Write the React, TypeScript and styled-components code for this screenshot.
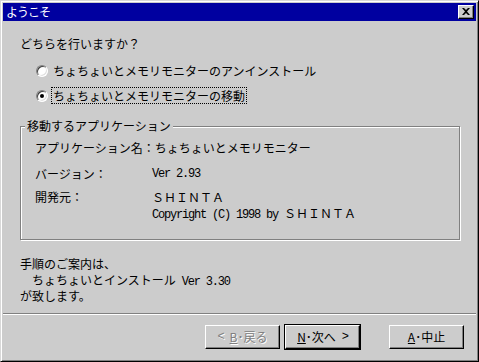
import React, { FC } from 'react';
import styled, { createGlobalStyle } from 'styled-components';

const GlobalStyle = createGlobalStyle`
  html, body {
    margin: 0;
    padding: 0;
    background: #cccccc;
  }
  body {
    font-family: "Noto Sans CJK JP", "Noto Sans", sans-serif;
    font-size: 12px;
    color: #000;
  }
`;

const Window = styled.div`
  box-sizing: border-box;
  width: 479px;
  height: 362px;
  padding: 2px;
  background: #cccccc;
  border-top: 1px solid #d8d8d8;
  border-left: 1px solid #d8d8d8;
  border-right: 1px solid #000;
  border-bottom: 1px solid #000;
  box-shadow: inset 1px 1px 0 #fff, inset -1px -1px 0 #808080;
  display: flex;
  flex-direction: column;
`;

const TitleBar = styled.div`
  height: 18px;
  background: #0000a0;
  color: #fff;
  display: flex;
  align-items: center;
  justify-content: space-between;
  padding: 0 2px 0 3px;
  line-height: 18px;
`;

const TitleText = styled.span`
  font-size: 12px;
  letter-spacing: -1px;
`;

const CloseButton = styled.div`
  box-sizing: border-box;
  width: 16px;
  height: 14px;
  background: #cccccc;
  border-top: 1px solid #fff;
  border-left: 1px solid #fff;
  border-right: 1px solid #000;
  border-bottom: 1px solid #000;
  box-shadow: inset -1px -1px 0 #808080;
  display: flex;
  align-items: center;
  justify-content: center;
  padding: 0 1px 1px 0;
`;

const Content = styled.div`
  padding: 15px 16px 0 17px;
  display: flex;
  flex-direction: column;
`;

const Line = styled.div`
  line-height: 16px;
  height: 16px;
  white-space: pre;
`;

const RadioList = styled.div`
  display: flex;
  flex-direction: column;
  gap: 8px;
  margin: 10px 0 0 16px;
`;

const RadioRow = styled.div`
  display: flex;
  align-items: center;
  gap: 4px;
  height: 17px;
`;

const RadioCircle = styled.span<{ $checked?: boolean }>`
  position: relative;
  box-sizing: border-box;
  width: 12px;
  height: 12px;
  border-radius: 50%;
  background: #fff;
  border-top: 1px solid #808080;
  border-left: 1px solid #808080;
  border-right: 1px solid #fff;
  border-bottom: 1px solid #fff;
  box-shadow: inset 1px 1px 0 #404040, inset -1px -1px 0 #dfdfdf;
  flex-shrink: 0;

  &::after {
    content: '';
    display: ${(p) => (p.$checked ? 'block' : 'none')};
    position: absolute;
    left: 3px;
    top: 3px;
    width: 4px;
    height: 4px;
    border-radius: 50%;
    background: #000;
  }
`;

const RadioLabel = styled.span<{ $focus?: boolean }>`
  line-height: 15px;
  padding: 0 1px;
  white-space: nowrap;
  outline: ${(p) => (p.$focus ? '1px dotted #000' : 'none')};
`;

const GroupBox = styled.div`
  position: relative;
  box-sizing: border-box;
  width: 440px;
  margin-top: 22px;
  padding: 13px 0 16px 14px;
  border: 1px solid #808080;
  box-shadow: 1px 1px 0 #fff, inset 1px 1px 0 #fff;
`;

const Legend = styled.span`
  position: absolute;
  top: -9px;
  left: 4px;
  padding: 0 2px;
  background: #cccccc;
  line-height: 16px;
  white-space: nowrap;
`;

const InfoRow = styled.div<{ $gap: number }>`
  display: flex;
  margin-top: ${(p) => p.$gap}px;
  line-height: 16px;
`;

const InfoLabel = styled.span`
  width: 117px;
  flex-shrink: 0;
  white-space: nowrap;
`;

const InfoValue = styled.div`
  display: flex;
  flex-direction: column;
  white-space: pre;
`;

const Half = styled.span`
  font-family: "Liberation Mono", monospace;
  font-size: 12px;
  letter-spacing: -1.2px;
`;

const Footnote = styled.div`
  margin-top: 16px;
  display: flex;
  flex-direction: column;
`;

const Separator = styled.div`
  height: 1px;
  margin-top: 9px;
  background: #808080;
  border-bottom: 1px solid #fff;
`;

const ButtonRow = styled.div`
  display: flex;
  justify-content: flex-end;
  align-items: center;
  padding: 10px 12px 0 0;
`;

const Button = styled.div<{ $default?: boolean; $disabled?: boolean; $ml: number }>`
  box-sizing: border-box;
  width: 75px;
  height: 24px;
  margin-left: ${(p) => p.$ml}px;
  background: #cccccc;
  border-top: 1px solid #fff;
  border-left: 1px solid #fff;
  border-right: 1px solid #000;
  border-bottom: 1px solid #000;
  box-shadow: inset -1px -1px 0 #808080;
  outline: ${(p) => (p.$default ? '1px solid #000' : 'none')};
  display: flex;
  align-items: center;
  justify-content: center;
  white-space: pre;
  line-height: 16px;
  color: ${(p) => (p.$disabled ? '#808080' : '#000')};
  text-shadow: ${(p) => (p.$disabled ? '1px 1px 0 #fff' : 'none')};
`;

const Accel = styled.span`
  text-decoration: underline;
`;

const CloseIcon: FC = () => (
  <svg width="8" height="7" viewBox="0 0 8 7">
    <path d="M0 0h2l2 2 2-2h2L5 3.5 8 7H6L4 5 2 7H0l3-3.5z" fill="#000" />
  </svg>
);

const App: FC = () => {
  return (
    <>
      <GlobalStyle />
      <Window>
        <TitleBar>
          <TitleText>ようこそ</TitleText>
          <CloseButton>
            <CloseIcon />
          </CloseButton>
        </TitleBar>

        <Content>
          <Line>どちらを行いますか？</Line>

          <RadioList>
            <RadioRow>
              <RadioCircle />
              <RadioLabel>ちょちょいとメモリモニターのアンインストール</RadioLabel>
            </RadioRow>
            <RadioRow>
              <RadioCircle $checked />
              <RadioLabel $focus>ちょちょいとメモリモニターの移動</RadioLabel>
            </RadioRow>
          </RadioList>

          <GroupBox>
            <Legend>移動するアプリケーション</Legend>
            <InfoRow $gap={0}>
              <InfoLabel>アプリケーション名：ちょちょいとメモリモニター</InfoLabel>
            </InfoRow>
            <InfoRow $gap={10}>
              <InfoLabel>バージョン：</InfoLabel>
              <InfoValue>
                <Half>Ver 2.93</Half>
              </InfoValue>
            </InfoRow>
            <InfoRow $gap={7}>
              <InfoLabel>開発元：</InfoLabel>
              <InfoValue>
                <span>ＳＨＩＮＴＡ</span>
                <span>
                  <Half>Copyright (C) 1998 by </Half>ＳＨＩＮＴＡ
                </span>
              </InfoValue>
            </InfoRow>
          </GroupBox>

          <Footnote>
            <Line>手順のご案内は、</Line>
            <Line>
              <Half>  </Half>ちょちょいとインストール<Half> Ver 3.30</Half>
            </Line>
            <Line>が致します。</Line>
          </Footnote>
        </Content>

        <Separator />

        <ButtonRow>
          <Button $disabled $ml={0}>
            <Half>{'< '}</Half><Accel>B</Accel>･戻る
          </Button>
          <Button $default $ml={5}>
            <Accel>N</Accel>･次へ<Half>{' >'}</Half>
          </Button>
          <Button $ml={29}>
            <Accel>A</Accel>･中止
          </Button>
        </ButtonRow>
      </Window>
    </>
  );
};

export default App;
